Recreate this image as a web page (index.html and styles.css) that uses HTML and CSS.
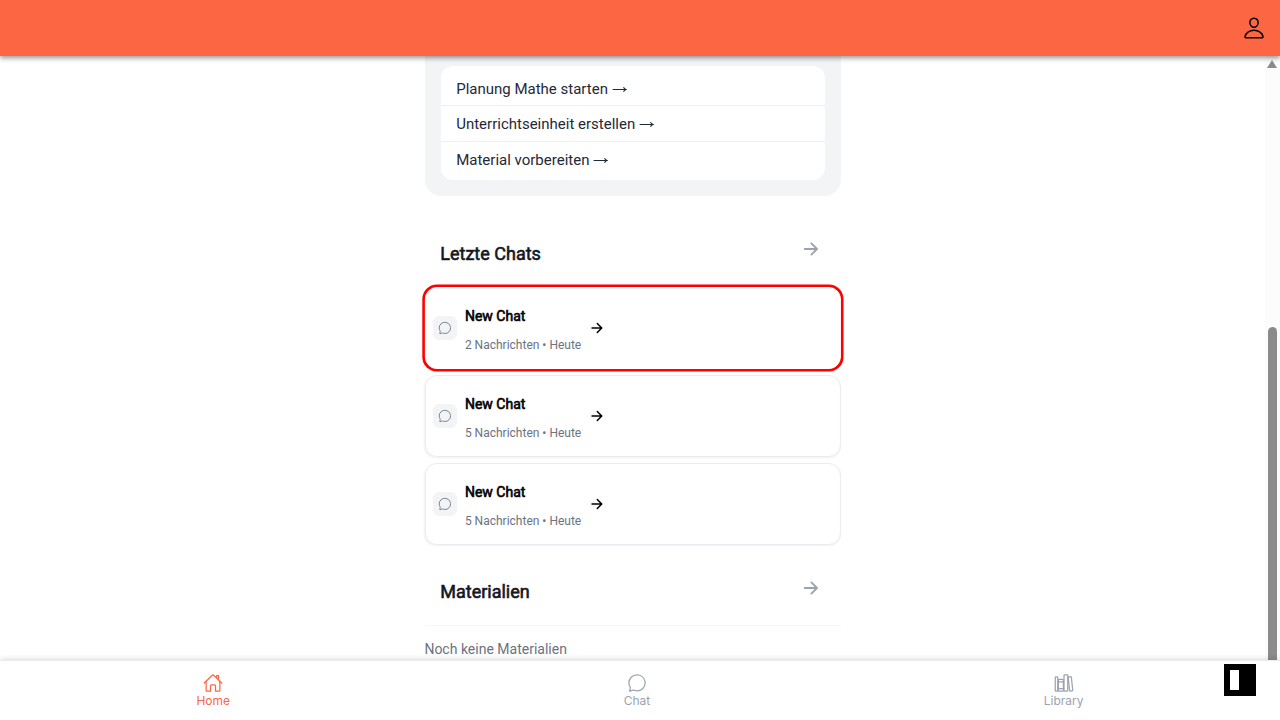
FILE: index.html
```html
<!DOCTYPE html>
<html lang="de">
<head>
<meta charset="utf-8">
<title>Home</title>
<link rel="stylesheet" href="styles.css">
</head>
<body>
<svg class="defs" aria-hidden="true">
  <symbol id="bubble" viewBox="0 0 512 512"><path d="M87.49 380c1.19-4.38-1.44-10.47-3.95-14.86a44.86 44.86 0 00-2.54-3.8 199.81 199.81 0 01-33-110C47.65 139.09 140.73 48 255.83 48 356.21 48 440 117.54 459.58 209.85a199 199 0 014.42 41.64c0 112.41-89.49 204.93-204.59 204.93-18.3 0-43-4.6-56.47-8.37s-26.92-8.77-30.39-10.11a31.09 31.09 0 00-11.12-2.07 30.71 30.71 0 00-12.09 2.43l-67.83 24.48a16 16 0 01-4.67 1.22 9.6 9.6 0 01-9.57-9.74 15.85 15.85 0 01.6-3.29z"/></symbol>
  <symbol id="arrow" viewBox="0 0 512 512"><path d="M268 112l144 144-144 144M392 256H100"/></symbol>
  <symbol id="long-arrow" viewBox="0 0 15 8"><path d="M.7 3.5H14M11.6 1.3Q12.3 3 14.2 3.5Q12.3 4 11.6 5.7"/></symbol>
</svg>
<header class="topbar">
  <svg class="icon profile" viewBox="0 0 512 512"><path d="M344 144c-3.92 52.87-44 96-88 96s-84.15-43.12-88-96c-4-55 35-96 88-96s92 42 88 96z"/><path d="M256 304c-87 0-175.3 48-191.64 138.6C62.39 453.52 68.57 464 80 464h352c11.44 0 17.62-10.48 15.65-21.4C431.3 352 343 304 256 304z"/></svg>
</header>
<main class="viewport">
  <div class="content">
    <section class="prompt">
      <ul class="links">
        <li>Planung Mathe starten <svg class="long"><use href="#long-arrow"/></svg></li>
        <li>Unterrichtseinheit erstellen <svg class="long"><use href="#long-arrow"/></svg></li>
        <li>Material vorbereiten <svg class="long"><use href="#long-arrow"/></svg></li>
      </ul>
    </section>
    <div class="section-head chats-head"><h2>Letzte Chats</h2><svg class="icon more"><use href="#arrow"/></svg></div>
    <div class="chats">
      <article class="chat selected">
        <span class="badge"><svg class="icon"><use href="#bubble"/></svg></span>
        <div class="chat-text"><h3>New Chat</h3><p>2 Nachrichten • Heute</p></div>
        <svg class="icon go"><use href="#arrow"/></svg>
      </article>
      <article class="chat">
        <span class="badge"><svg class="icon"><use href="#bubble"/></svg></span>
        <div class="chat-text"><h3>New Chat</h3><p>5 Nachrichten • Heute</p></div>
        <svg class="icon go"><use href="#arrow"/></svg>
      </article>
      <article class="chat">
        <span class="badge"><svg class="icon"><use href="#bubble"/></svg></span>
        <div class="chat-text"><h3>New Chat</h3><p>5 Nachrichten • Heute</p></div>
        <svg class="icon go"><use href="#arrow"/></svg>
      </article>
    </div>
    <div class="section-head materials-head"><h2>Materialien</h2><svg class="icon more"><use href="#arrow"/></svg></div>
    <p class="empty">Noch keine Materialien</p>
  </div>
  <div class="scrollbar"><span class="scroll-up"></span><span class="scroll-thumb"></span></div>
</main>
<nav class="tabs">
  <a class="tab active"><svg class="icon" viewBox="0 0 512 512"><path d="M80 212v236a16 16 0 0016 16h96V328a24 24 0 0124-24h80a24 24 0 0124 24v136h96a16 16 0 0016-16V212"/><path d="M480 256L266.89 52c-5-5.28-16.69-5.34-21.78 0L32 256M400 179V64h-48v69"/></svg>Home</a>
  <a class="tab"><svg class="icon"><use href="#bubble"/></svg>Chat</a>
  <a class="tab"><svg class="icon" viewBox="0 0 512 512"><rect x="32" y="96" width="64" height="368" rx="16"/><path d="M112 224h128M112 400h128"/><rect x="112" y="160" width="128" height="304" rx="16"/><rect x="256" y="48" width="96" height="416" rx="16"/><path d="M422.46 96.11l-40.4 4.25c-11.12 1.17-19.18 11.57-17.93 23.1l34.92 321.59c1.26 11.53 11.37 20 22.49 18.84l40.4-4.25c11.12-1.17 19.18-11.57 17.93-23.1L445 115c-1.31-11.58-11.42-20.06-22.54-18.89z"/></svg>Library</a>
  <span class="widget"></span>
</nav>
</body>
</html>
```
FILE: styles.css
```css
* { box-sizing: border-box; }
body {
  margin: 0;
  height: 720px;
  overflow: hidden;
  display: flex;
  flex-direction: column;
  font-family: Roboto, "Liberation Sans", sans-serif;
  background: #fff;
}
h2, h3, p, ul { margin: 0; padding: 0; }
.defs { position: absolute; width: 0; height: 0; }
.icon {
  display: block;
  flex: none;
  fill: none;
  stroke: currentColor;
  stroke-width: 32;
  stroke-linecap: round;
  stroke-linejoin: round;
}
.long { width: 15px; height: 8px; fill: none; stroke: currentColor; stroke-width: 1.1; }
.topbar {
  position: relative;
  z-index: 2;
  flex: none;
  height: 56px;
  padding: 0 14px;
  display: flex;
  align-items: center;
  justify-content: flex-end;
  background: #fd6642;
  box-shadow: 0 2px 5px rgba(0, 0, 0, .42);
}
.profile { width: 24px; height: 24px; color: #000; }
.viewport { flex: 1; min-height: 0; display: flex; overflow: hidden; }
.content { width: 416px; margin: 0 auto; transform: translateX(-.1px); }
.prompt {
  padding: 10px 16px 16px;
  height: 140px;
  background: #f2f4f6;
  border-radius: 0 0 16px 16px;
}
.links {
  list-style: none;
  height: 114px;
  padding-top: 4px;
  background: #fff;
  border-radius: 12px;
  font-size: 15px;
  color: #1f2937;
}
.links li { height: 36px; padding: 0 15.8px; line-height: 36px; border-bottom: 1px solid #eeeff1; }
.links li:first-child { line-height: 38px; }
.links li:last-child { border: 0; }
.section-head {
  display: flex;
  justify-content: space-between;
  padding: 0 20px 0 15.9px;
  color: #111827;
}
.section-head h2 { font-size: 18px; line-height: 24px; font-weight: 400; -webkit-text-stroke: .6px currentColor; }
.more { width: 20px; height: 20px; color: #9ca3af; stroke-width: 48; }
.chats-head { height: 91px; padding-top: 46px; align-items: flex-start; }
.chats-head .more { margin-top: -3px; }
.chats { display: grid; gap: 6px; }
.chat {
  height: 82px;
  padding: 3px 8px 0 7.5px;
  display: flex;
  align-items: center;
  background: #fff;
  border: 1px solid #ebecef;
  border-radius: 12px;
  box-shadow: 0 1px 2px rgba(0, 0, 0, .06);
}
.selected { border-color: #fff; box-shadow: 0 0 0 2.6px #f00; }
.badge { width: 24px; height: 24px; padding: 5px; margin-bottom: 3px; background: #f3f4f6; border-radius: 6px; color: #6b7280; }
.badge .icon { width: 14px; height: 14px; }
.chat-text { margin-left: 8px; width: 124.3px; }
.chat-text h3 { font-size: 14px; line-height: 20px; font-weight: 400; color: #000; -webkit-text-stroke: .6px #000; }
.chat-text p { margin-top: 11px; font-size: 12px; line-height: 16px; color: #6b7280; }
.go { width: 16px; height: 16px; margin-bottom: 3px; stroke-width: 48; color: #000; }
.materials-head { height: 81px; padding-top: 35px; border-bottom: 1px solid #f6f6f7; }
.materials-head .more { margin-top: -2px; }
.empty { padding-top: 13px; font-size: 14px; line-height: 20px; color: #6b7280; }
.scrollbar {
  width: 15px;
  flex: none;
  display: flex;
  flex-direction: column;
  align-items: center;
  background: #fcfcfc;
}
.scroll-up { margin: 4px 1px 0 0; border: 5px solid transparent; border-top: 0; border-bottom: 8px solid #8b8b8b; }
.scroll-thumb { flex: none; width: 9px; height: 350px; margin-top: 259px; border-radius: 5px; background: #8b8b8b; }
.tabs {
  position: relative;
  z-index: 2;
  flex: none;
  height: 60px;
  padding-top: 12px;
  display: grid;
  grid-template-columns: 426.4px 421px 432.6px;
  background: #fff;
  border-top: 1px solid #ececec;
  box-shadow: 0 -1px 5px rgba(0, 0, 0, .15);
}
.tab {
  display: flex;
  flex-direction: column;
  align-items: center;
  gap: 1px;
  font: 12px/14px Inter, sans-serif;
  color: #9ca3af;
}
.tab .icon { width: 20px; height: 20px; }
.active { color: #fd6642; }
.widget { position: absolute; left: 1224px; top: 3px; width: 32px; height: 32px; background: #000; }
.widget::after { content: ""; position: absolute; left: 6px; top: 6px; width: 9px; height: 20px; background: #fff; }
```
